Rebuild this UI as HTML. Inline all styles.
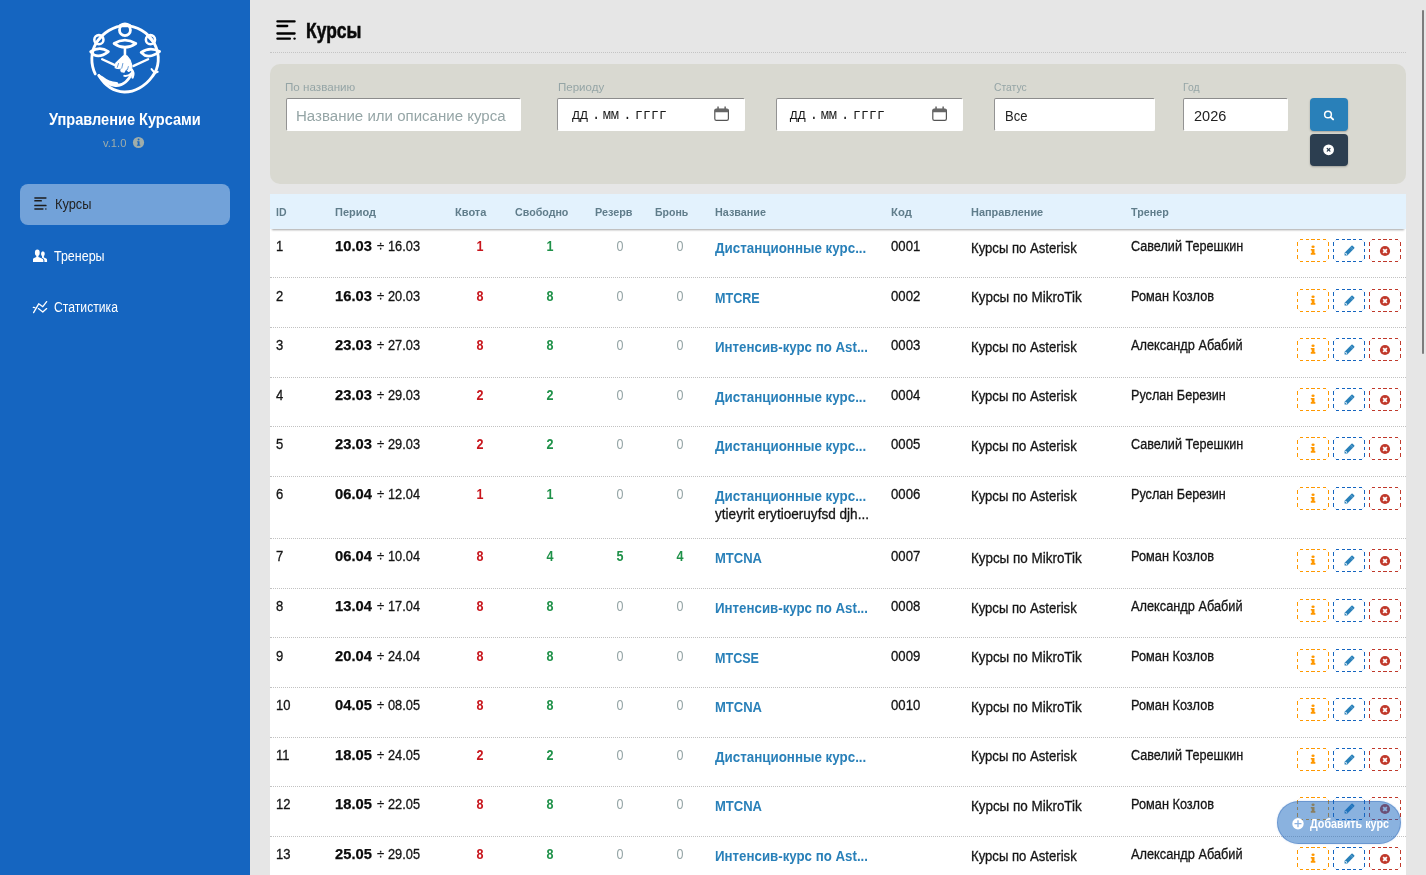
<!DOCTYPE html><html lang="ru"><head><meta charset="utf-8"><title>Курсы</title><style>
*{box-sizing:border-box}
html,body{margin:0;padding:0}
body{width:1426px;height:875px;overflow:hidden;position:relative;background:#e6e6e6;font-family:"Liberation Sans",sans-serif;}
.t{position:absolute;white-space:pre;line-height:20px;display:block}
.abs{position:absolute}
#side{position:absolute;left:0;top:0;width:250px;height:875px;background:#1565c0}
#active{position:absolute;left:20px;top:184px;width:210px;height:40.6px;border-radius:8px;background:rgba(255,255,255,.4)}
#hline{position:absolute;left:270px;top:52px;width:1136px;height:0;border-top:1px dotted #c4c4c4}
#filter{position:absolute;left:270px;top:64px;width:1136px;height:119.5px;border-radius:10px;background:#d9d9d1}
.inp{position:absolute;top:98px;height:33px;background:#fff;border-top:1px solid #8c8c8c;border-left:1px solid #939393;border-right:1px solid #fff;border-bottom:1px solid #fff;border-radius:2px}
.btn{position:absolute;left:1310px;width:38px;border-radius:4px;box-shadow:0 1px 2px rgba(0,0,0,.25)}
#thead{position:absolute;left:270px;top:194px;width:1136px;height:34.8px;background:#e3f2fd;box-shadow:0 3.2px 2px -2px rgba(0,0,0,.36);z-index:2}
#tbody{position:absolute;left:270px;top:228.8px;width:1136px;height:660px;background:#fff}
.row{position:absolute;left:270px;width:1136px;border-bottom:1px dotted #c2c2c2}
.ab{position:absolute;width:32px;height:23px;background:
linear-gradient(90deg,transparent 3px,var(--c) 3px 6.45px,transparent 6.45px 9px,var(--c) 9px 12px,transparent 12px 14.4px,var(--c) 14.4px 17.6px,transparent 17.6px 20px,var(--c) 20px 23px,transparent 23px 25.55px,var(--c) 25.55px 29px,transparent 29px) 0 0/100% 1px no-repeat,
linear-gradient(90deg,transparent 3px,var(--c) 3px 6.45px,transparent 6.45px 9px,var(--c) 9px 12px,transparent 12px 14.4px,var(--c) 14.4px 17.6px,transparent 17.6px 20px,var(--c) 20px 23px,transparent 23px 25.55px,var(--c) 25.55px 29px,transparent 29px) 0 100%/100% 1px no-repeat,
linear-gradient(180deg,transparent 2.9px,var(--c) 2.9px 7px,transparent 7px 9.8px,var(--c) 9.8px 13px,transparent 13px 15.9px,var(--c) 15.9px 20px,transparent 20px) 0 0/1px 100% no-repeat,
linear-gradient(180deg,transparent 2.9px,var(--c) 2.9px 7px,transparent 7px 9.8px,var(--c) 9.8px 13px,transparent 13px 15.9px,var(--c) 15.9px 20px,transparent 20px) 100% 0/1px 100% no-repeat,
linear-gradient(var(--d),var(--d)) 2.1px 0.6px/1px 1px no-repeat,
linear-gradient(var(--d),var(--d)) 0.6px 2.0px/1px 1px no-repeat,
linear-gradient(var(--d),var(--d)) 28.9px 0.6px/1px 1px no-repeat,
linear-gradient(var(--d),var(--d)) 30.4px 2.0px/1px 1px no-repeat,
linear-gradient(var(--d),var(--d)) 2.1px 21.4px/1px 1px no-repeat,
linear-gradient(var(--d),var(--d)) 0.6px 20.0px/1px 1px no-repeat,
linear-gradient(var(--d),var(--d)) 28.9px 21.4px/1px 1px no-repeat,
linear-gradient(var(--d),var(--d)) 30.4px 20.0px/1px 1px no-repeat}
.ab svg{position:absolute;left:50%;top:50%}
#add{position:absolute;left:1277px;top:801px;width:124px;height:43.4px;border-radius:22px;background:rgba(21,101,192,.5);z-index:5;border:1px solid rgba(21,80,170,.28);box-shadow:0 0 1.5px rgba(21,101,192,.3)}
#txt{position:absolute;left:0;top:0;width:1426px;height:875px;z-index:7;will-change:transform;pointer-events:none}
#sb{position:absolute;left:1422px;top:10px;width:2px;height:344px;background:#7d7d7d;border-radius:1px;z-index:9}
</style></head><body>
<div id="side"></div><div id="active"></div>
<svg class="abs" style="left:85px;top:17px;" width="80" height="80" viewBox="0 0 875 875">
<g fill="none" stroke="#fff" stroke-linecap="round" stroke-linejoin="round">
 <path d="M112 622 C62 520 60 385 120 290 C190 172 320 96 435 94 C560 96 690 162 758 290 C828 420 808 560 738 648 C660 758 540 822 430 820 C330 816 225 762 152 640" stroke-width="31"/>
 <circle cx="437" cy="143" r="60" stroke-width="31"/>
 <path d="M385 92 Q437 60 490 92" stroke-width="30"/>
 <circle cx="152" cy="248" r="50" stroke-width="28"/>
 <circle cx="716" cy="248" r="50" stroke-width="28"/>
 <path d="M112 292 L195 207" stroke-width="18"/>
 <path d="M678 207 L760 292" stroke-width="18"/>
 <path d="M318 290 Q437 215 556 290 Q437 372 318 290 Z" stroke-width="30"/>
 <path d="M62 380 Q160 312 256 378 Q170 445 100 415 Z" stroke-width="30"/>
 <path d="M614 388 Q712 318 816 378 Q735 445 655 420 Z" stroke-width="30"/>
 <path d="M437 345 L437 430" stroke-width="28"/>
 <path d="M188 462 L345 535" stroke-width="26"/>
 <path d="M690 462 L532 535" stroke-width="26"/>
 <path d="M152 640 Q235 738 332 750 Q450 758 520 602" stroke-width="30"/>
 <path d="M175 660 Q260 728 345 730" stroke-width="40"/>
 <path d="M728 570 L762 612 L795 600" stroke-width="22"/>
</g>
<path d="M419 424 L458 424 L494 472 L514 532 L510 580 L478 596 L452 574 L428 604 L398 598 L384 566 L352 562 L330 556 L336 506 Z" fill="#fff" stroke="#fff" stroke-width="12" stroke-linejoin="round"/>
<g stroke="#1565c0" stroke-width="7" stroke-linecap="round"><path d="M367 508 L353 550"/><path d="M414 508 L402 560"/><path d="M474 542 L464 578"/></g>
<path d="M452 580 L440 612 M384 570 L378 590" stroke="#1565c0" stroke-width="10" stroke-linecap="round"/>
<path d="M512 578 Q542 612 520 662" fill="none" stroke="#fff" stroke-width="26" stroke-linecap="round"/>
<path d="M506 618 Q470 652 430 644" fill="none" stroke="#fff" stroke-width="22" stroke-linecap="round"/>
</svg>
<svg class="abs" style="left:132px;top:136px;" width="13" height="13" viewBox="0 0 13 13"><circle cx="6.5" cy="6.5" r="5.6" fill="#9fadaa"/><g fill="#1565c0"><circle cx="6.6" cy="3.5" r="0.95"/><path d="M5.1 5.2H7.5V8.7H8.3V9.8H4.9V8.7H5.7V6.2H5.1Z"/></g></svg>
<svg class="abs" style="left:33.6px;top:197.4px;overflow:visible;" width="12.8" height="12.8" viewBox="0 0 20 20"><rect x="0.3" y="0.20" width="19.4" height="2.4" rx="1.1" fill="#1c1c1c"/><rect x="0.3" y="4.80" width="12.1" height="2.4" rx="1.1" fill="#1c1c1c"/><rect x="0.3" y="12.25" width="19.4" height="2.4" rx="1.1" fill="#1c1c1c"/><rect x="0.3" y="17.40" width="14.7" height="2.4" rx="1.1" fill="#1c1c1c"/><circle cx="18.55" cy="18.6" r="1.2" fill="#1c1c1c"/></svg>
<svg class="abs" style="left:33px;top:249px;" width="15" height="14" viewBox="0 0 15 14"><g fill="#fff"><ellipse cx="4.3" cy="3.7" rx="2.4" ry="3.3"/><path d="M0 13V10.3Q0 9.3 1.1 8.9L3.3 8V6H5.4V8L9 9.4Q10.4 10 10.4 11.4V13Z"/><ellipse cx="9.9" cy="4.8" rx="1.85" ry="2.5"/><path d="M11.4 13V11.2Q11.3 9.9 10 9.3L9 8.7V7H10.9V8.5L13.2 9.6Q14.05 10 14.05 11V13Z"/></g></svg>
<svg class="abs" style="left:33px;top:301px;overflow:visible;" width="15" height="13" viewBox="0 0 15 13"><g fill="none" stroke="#fff" stroke-width="1.3" stroke-linecap="round" stroke-linejoin="round"><path d="M0.6 11.6L5.7 2.8L9.8 5.7L13.65 0.6"/><path d="M0.3 6.3L1.9 6.6"/><path d="M5.4 7.6L9.8 11.1L13.65 7.6"/></g></svg>
<svg class="abs" style="left:275.5px;top:20.2px;overflow:visible;" width="20" height="20" viewBox="0 0 20 20"><rect x="0.3" y="0.20" width="19.4" height="2.4" rx="1.1" fill="#000"/><rect x="0.3" y="4.80" width="12.1" height="2.4" rx="1.1" fill="#000"/><rect x="0.3" y="12.25" width="19.4" height="2.4" rx="1.1" fill="#000"/><rect x="0.3" y="17.40" width="14.7" height="2.4" rx="1.1" fill="#000"/><circle cx="18.55" cy="18.6" r="1.2" fill="#000"/></svg>
<div id="hline"></div><div id="filter"></div>
<div class="inp" style="left:285.5px;width:235.5px"></div>
<div class="inp" style="left:557px;width:188px"></div>
<div class="inp" style="left:776px;width:187px"></div>
<div class="inp" style="left:994px;width:161px"></div>
<div class="inp" style="left:1183px;width:105px"></div>
<svg class="abs" style="left:714px;top:106px" width="16" height="16" viewBox="0 0 16 16"><g fill="none" stroke="#555" stroke-width="1.2"><rect x="0.8" y="3" width="13.6" height="11.4" rx="1.6"/></g><path d="M0.8 4.6Q0.8 3 2.4 3H12.8Q14.4 3 14.4 4.6V6.3H0.8Z" fill="#666"/><rect x="3.3" y="0.5" width="1.5" height="3" fill="#666"/><rect x="10.4" y="0.5" width="1.5" height="3" fill="#666"/></svg>
<svg class="abs" style="left:932px;top:106px" width="16" height="16" viewBox="0 0 16 16"><g fill="none" stroke="#555" stroke-width="1.2"><rect x="0.8" y="3" width="13.6" height="11.4" rx="1.6"/></g><path d="M0.8 4.6Q0.8 3 2.4 3H12.8Q14.4 3 14.4 4.6V6.3H0.8Z" fill="#666"/><rect x="3.3" y="0.5" width="1.5" height="3" fill="#666"/><rect x="10.4" y="0.5" width="1.5" height="3" fill="#666"/></svg>
<div class="btn" style="top:98px;height:33px;background:#2980b9"></div>
<div class="btn" style="top:134px;height:32px;background:#2c3e50"></div>
<svg class="abs" style="left:1322px;top:109px;" width="14" height="13" viewBox="0 0 14 13"><g fill="none" stroke="#fff" stroke-linecap="round"><circle cx="6" cy="5.5" r="3.35" stroke-width="1.5"/><path d="M8.7 8.1L11.1 10.4" stroke-width="2"/></g></svg>
<svg class="abs" style="left:1322px;top:143px;" width="14" height="14" viewBox="0 0 14 14"><circle cx="6.6" cy="6.8" r="5.4" fill="#fff"/><path d="M5.25 5.45L7.95 8.15M7.95 5.45L5.25 8.15" stroke="#2c3e50" stroke-width="1.3" stroke-linecap="round"/></svg>
<div id="tbody"></div><div id="thead"></div>
<div class="row" style="top:228.80px;height:49.6px"></div>
<div class="ab" style="left:1297px;top:239.00px;--c:#ff9800;--d:rgba(255,152,0,.12)"><svg width="8" height="12" viewBox="0 0 8 12" style="margin:-6.5px 0 0 -4.0px"><g fill="#ff9800"><ellipse cx="4.05" cy="2.75" rx="1.6" ry="1.25"/><path d="M1.8 5.0H5.5V8.9H6.35V10.75H1.8V8.9H2.7V6.5H1.8Z"/></g></svg></div>
<div class="ab" style="left:1333px;top:239.00px;--c:#1565c0;--d:rgba(21,101,192,.12)"><svg width="12" height="12" viewBox="-6 -6 12 12" style="margin:-5.4px 0 0 -6.0px;overflow:visible"><g transform="rotate(-45)" fill="#2980b9"><path d="M-4.3 -1.95H5.4Q6.25 -1.95 6.25 -1.1V1.1Q6.25 1.95 5.4 1.95H-4.3L-6.25 0Z"/><path d="M-4.0 -1.15L-4.0 1.15" stroke="#fff" stroke-width="0.95"/><path d="M3.2 -1.95V1.95M4.3 -1.95V1.95" stroke="#fff" stroke-width="0.35" opacity=".6"/></g></svg></div>
<div class="ab" style="left:1369px;top:239.00px;--c:#c0392b;--d:rgba(192,57,43,.12)"><svg width="12" height="12" viewBox="0 0 12 12" style="margin:-5.55px 0 0 -5.8px"><circle cx="6" cy="6" r="5.1" fill="#c0392b"/><path d="M4.15 4.15L7.85 7.85M7.85 4.15L4.15 7.85" stroke="#fff" stroke-width="1.75"/></svg></div>
<div class="row" style="top:278.40px;height:49.6px"></div>
<div class="ab" style="left:1297px;top:289.00px;--c:#ff9800;--d:rgba(255,152,0,.12)"><svg width="8" height="12" viewBox="0 0 8 12" style="margin:-6.5px 0 0 -4.0px"><g fill="#ff9800"><ellipse cx="4.05" cy="2.75" rx="1.6" ry="1.25"/><path d="M1.8 5.0H5.5V8.9H6.35V10.75H1.8V8.9H2.7V6.5H1.8Z"/></g></svg></div>
<div class="ab" style="left:1333px;top:289.00px;--c:#1565c0;--d:rgba(21,101,192,.12)"><svg width="12" height="12" viewBox="-6 -6 12 12" style="margin:-5.4px 0 0 -6.0px;overflow:visible"><g transform="rotate(-45)" fill="#2980b9"><path d="M-4.3 -1.95H5.4Q6.25 -1.95 6.25 -1.1V1.1Q6.25 1.95 5.4 1.95H-4.3L-6.25 0Z"/><path d="M-4.0 -1.15L-4.0 1.15" stroke="#fff" stroke-width="0.95"/><path d="M3.2 -1.95V1.95M4.3 -1.95V1.95" stroke="#fff" stroke-width="0.35" opacity=".6"/></g></svg></div>
<div class="ab" style="left:1369px;top:289.00px;--c:#c0392b;--d:rgba(192,57,43,.12)"><svg width="12" height="12" viewBox="0 0 12 12" style="margin:-5.55px 0 0 -5.8px"><circle cx="6" cy="6" r="5.1" fill="#c0392b"/><path d="M4.15 4.15L7.85 7.85M7.85 4.15L4.15 7.85" stroke="#fff" stroke-width="1.75"/></svg></div>
<div class="row" style="top:328.00px;height:49.6px"></div>
<div class="ab" style="left:1297px;top:338.00px;--c:#ff9800;--d:rgba(255,152,0,.12)"><svg width="8" height="12" viewBox="0 0 8 12" style="margin:-6.5px 0 0 -4.0px"><g fill="#ff9800"><ellipse cx="4.05" cy="2.75" rx="1.6" ry="1.25"/><path d="M1.8 5.0H5.5V8.9H6.35V10.75H1.8V8.9H2.7V6.5H1.8Z"/></g></svg></div>
<div class="ab" style="left:1333px;top:338.00px;--c:#1565c0;--d:rgba(21,101,192,.12)"><svg width="12" height="12" viewBox="-6 -6 12 12" style="margin:-5.4px 0 0 -6.0px;overflow:visible"><g transform="rotate(-45)" fill="#2980b9"><path d="M-4.3 -1.95H5.4Q6.25 -1.95 6.25 -1.1V1.1Q6.25 1.95 5.4 1.95H-4.3L-6.25 0Z"/><path d="M-4.0 -1.15L-4.0 1.15" stroke="#fff" stroke-width="0.95"/><path d="M3.2 -1.95V1.95M4.3 -1.95V1.95" stroke="#fff" stroke-width="0.35" opacity=".6"/></g></svg></div>
<div class="ab" style="left:1369px;top:338.00px;--c:#c0392b;--d:rgba(192,57,43,.12)"><svg width="12" height="12" viewBox="0 0 12 12" style="margin:-5.55px 0 0 -5.8px"><circle cx="6" cy="6" r="5.1" fill="#c0392b"/><path d="M4.15 4.15L7.85 7.85M7.85 4.15L4.15 7.85" stroke="#fff" stroke-width="1.75"/></svg></div>
<div class="row" style="top:377.60px;height:49.6px"></div>
<div class="ab" style="left:1297px;top:388.00px;--c:#ff9800;--d:rgba(255,152,0,.12)"><svg width="8" height="12" viewBox="0 0 8 12" style="margin:-6.5px 0 0 -4.0px"><g fill="#ff9800"><ellipse cx="4.05" cy="2.75" rx="1.6" ry="1.25"/><path d="M1.8 5.0H5.5V8.9H6.35V10.75H1.8V8.9H2.7V6.5H1.8Z"/></g></svg></div>
<div class="ab" style="left:1333px;top:388.00px;--c:#1565c0;--d:rgba(21,101,192,.12)"><svg width="12" height="12" viewBox="-6 -6 12 12" style="margin:-5.4px 0 0 -6.0px;overflow:visible"><g transform="rotate(-45)" fill="#2980b9"><path d="M-4.3 -1.95H5.4Q6.25 -1.95 6.25 -1.1V1.1Q6.25 1.95 5.4 1.95H-4.3L-6.25 0Z"/><path d="M-4.0 -1.15L-4.0 1.15" stroke="#fff" stroke-width="0.95"/><path d="M3.2 -1.95V1.95M4.3 -1.95V1.95" stroke="#fff" stroke-width="0.35" opacity=".6"/></g></svg></div>
<div class="ab" style="left:1369px;top:388.00px;--c:#c0392b;--d:rgba(192,57,43,.12)"><svg width="12" height="12" viewBox="0 0 12 12" style="margin:-5.55px 0 0 -5.8px"><circle cx="6" cy="6" r="5.1" fill="#c0392b"/><path d="M4.15 4.15L7.85 7.85M7.85 4.15L4.15 7.85" stroke="#fff" stroke-width="1.75"/></svg></div>
<div class="row" style="top:427.20px;height:49.6px"></div>
<div class="ab" style="left:1297px;top:437.00px;--c:#ff9800;--d:rgba(255,152,0,.12)"><svg width="8" height="12" viewBox="0 0 8 12" style="margin:-6.5px 0 0 -4.0px"><g fill="#ff9800"><ellipse cx="4.05" cy="2.75" rx="1.6" ry="1.25"/><path d="M1.8 5.0H5.5V8.9H6.35V10.75H1.8V8.9H2.7V6.5H1.8Z"/></g></svg></div>
<div class="ab" style="left:1333px;top:437.00px;--c:#1565c0;--d:rgba(21,101,192,.12)"><svg width="12" height="12" viewBox="-6 -6 12 12" style="margin:-5.4px 0 0 -6.0px;overflow:visible"><g transform="rotate(-45)" fill="#2980b9"><path d="M-4.3 -1.95H5.4Q6.25 -1.95 6.25 -1.1V1.1Q6.25 1.95 5.4 1.95H-4.3L-6.25 0Z"/><path d="M-4.0 -1.15L-4.0 1.15" stroke="#fff" stroke-width="0.95"/><path d="M3.2 -1.95V1.95M4.3 -1.95V1.95" stroke="#fff" stroke-width="0.35" opacity=".6"/></g></svg></div>
<div class="ab" style="left:1369px;top:437.00px;--c:#c0392b;--d:rgba(192,57,43,.12)"><svg width="12" height="12" viewBox="0 0 12 12" style="margin:-5.55px 0 0 -5.8px"><circle cx="6" cy="6" r="5.1" fill="#c0392b"/><path d="M4.15 4.15L7.85 7.85M7.85 4.15L4.15 7.85" stroke="#fff" stroke-width="1.75"/></svg></div>
<div class="row" style="top:476.80px;height:62.4px"></div>
<div class="ab" style="left:1297px;top:487.00px;--c:#ff9800;--d:rgba(255,152,0,.12)"><svg width="8" height="12" viewBox="0 0 8 12" style="margin:-6.5px 0 0 -4.0px"><g fill="#ff9800"><ellipse cx="4.05" cy="2.75" rx="1.6" ry="1.25"/><path d="M1.8 5.0H5.5V8.9H6.35V10.75H1.8V8.9H2.7V6.5H1.8Z"/></g></svg></div>
<div class="ab" style="left:1333px;top:487.00px;--c:#1565c0;--d:rgba(21,101,192,.12)"><svg width="12" height="12" viewBox="-6 -6 12 12" style="margin:-5.4px 0 0 -6.0px;overflow:visible"><g transform="rotate(-45)" fill="#2980b9"><path d="M-4.3 -1.95H5.4Q6.25 -1.95 6.25 -1.1V1.1Q6.25 1.95 5.4 1.95H-4.3L-6.25 0Z"/><path d="M-4.0 -1.15L-4.0 1.15" stroke="#fff" stroke-width="0.95"/><path d="M3.2 -1.95V1.95M4.3 -1.95V1.95" stroke="#fff" stroke-width="0.35" opacity=".6"/></g></svg></div>
<div class="ab" style="left:1369px;top:487.00px;--c:#c0392b;--d:rgba(192,57,43,.12)"><svg width="12" height="12" viewBox="0 0 12 12" style="margin:-5.55px 0 0 -5.8px"><circle cx="6" cy="6" r="5.1" fill="#c0392b"/><path d="M4.15 4.15L7.85 7.85M7.85 4.15L4.15 7.85" stroke="#fff" stroke-width="1.75"/></svg></div>
<div class="row" style="top:539.20px;height:49.6px"></div>
<div class="ab" style="left:1297px;top:549.00px;--c:#ff9800;--d:rgba(255,152,0,.12)"><svg width="8" height="12" viewBox="0 0 8 12" style="margin:-6.5px 0 0 -4.0px"><g fill="#ff9800"><ellipse cx="4.05" cy="2.75" rx="1.6" ry="1.25"/><path d="M1.8 5.0H5.5V8.9H6.35V10.75H1.8V8.9H2.7V6.5H1.8Z"/></g></svg></div>
<div class="ab" style="left:1333px;top:549.00px;--c:#1565c0;--d:rgba(21,101,192,.12)"><svg width="12" height="12" viewBox="-6 -6 12 12" style="margin:-5.4px 0 0 -6.0px;overflow:visible"><g transform="rotate(-45)" fill="#2980b9"><path d="M-4.3 -1.95H5.4Q6.25 -1.95 6.25 -1.1V1.1Q6.25 1.95 5.4 1.95H-4.3L-6.25 0Z"/><path d="M-4.0 -1.15L-4.0 1.15" stroke="#fff" stroke-width="0.95"/><path d="M3.2 -1.95V1.95M4.3 -1.95V1.95" stroke="#fff" stroke-width="0.35" opacity=".6"/></g></svg></div>
<div class="ab" style="left:1369px;top:549.00px;--c:#c0392b;--d:rgba(192,57,43,.12)"><svg width="12" height="12" viewBox="0 0 12 12" style="margin:-5.55px 0 0 -5.8px"><circle cx="6" cy="6" r="5.1" fill="#c0392b"/><path d="M4.15 4.15L7.85 7.85M7.85 4.15L4.15 7.85" stroke="#fff" stroke-width="1.75"/></svg></div>
<div class="row" style="top:588.80px;height:49.6px"></div>
<div class="ab" style="left:1297px;top:599.00px;--c:#ff9800;--d:rgba(255,152,0,.12)"><svg width="8" height="12" viewBox="0 0 8 12" style="margin:-6.5px 0 0 -4.0px"><g fill="#ff9800"><ellipse cx="4.05" cy="2.75" rx="1.6" ry="1.25"/><path d="M1.8 5.0H5.5V8.9H6.35V10.75H1.8V8.9H2.7V6.5H1.8Z"/></g></svg></div>
<div class="ab" style="left:1333px;top:599.00px;--c:#1565c0;--d:rgba(21,101,192,.12)"><svg width="12" height="12" viewBox="-6 -6 12 12" style="margin:-5.4px 0 0 -6.0px;overflow:visible"><g transform="rotate(-45)" fill="#2980b9"><path d="M-4.3 -1.95H5.4Q6.25 -1.95 6.25 -1.1V1.1Q6.25 1.95 5.4 1.95H-4.3L-6.25 0Z"/><path d="M-4.0 -1.15L-4.0 1.15" stroke="#fff" stroke-width="0.95"/><path d="M3.2 -1.95V1.95M4.3 -1.95V1.95" stroke="#fff" stroke-width="0.35" opacity=".6"/></g></svg></div>
<div class="ab" style="left:1369px;top:599.00px;--c:#c0392b;--d:rgba(192,57,43,.12)"><svg width="12" height="12" viewBox="0 0 12 12" style="margin:-5.55px 0 0 -5.8px"><circle cx="6" cy="6" r="5.1" fill="#c0392b"/><path d="M4.15 4.15L7.85 7.85M7.85 4.15L4.15 7.85" stroke="#fff" stroke-width="1.75"/></svg></div>
<div class="row" style="top:638.40px;height:49.6px"></div>
<div class="ab" style="left:1297px;top:649.00px;--c:#ff9800;--d:rgba(255,152,0,.12)"><svg width="8" height="12" viewBox="0 0 8 12" style="margin:-6.5px 0 0 -4.0px"><g fill="#ff9800"><ellipse cx="4.05" cy="2.75" rx="1.6" ry="1.25"/><path d="M1.8 5.0H5.5V8.9H6.35V10.75H1.8V8.9H2.7V6.5H1.8Z"/></g></svg></div>
<div class="ab" style="left:1333px;top:649.00px;--c:#1565c0;--d:rgba(21,101,192,.12)"><svg width="12" height="12" viewBox="-6 -6 12 12" style="margin:-5.4px 0 0 -6.0px;overflow:visible"><g transform="rotate(-45)" fill="#2980b9"><path d="M-4.3 -1.95H5.4Q6.25 -1.95 6.25 -1.1V1.1Q6.25 1.95 5.4 1.95H-4.3L-6.25 0Z"/><path d="M-4.0 -1.15L-4.0 1.15" stroke="#fff" stroke-width="0.95"/><path d="M3.2 -1.95V1.95M4.3 -1.95V1.95" stroke="#fff" stroke-width="0.35" opacity=".6"/></g></svg></div>
<div class="ab" style="left:1369px;top:649.00px;--c:#c0392b;--d:rgba(192,57,43,.12)"><svg width="12" height="12" viewBox="0 0 12 12" style="margin:-5.55px 0 0 -5.8px"><circle cx="6" cy="6" r="5.1" fill="#c0392b"/><path d="M4.15 4.15L7.85 7.85M7.85 4.15L4.15 7.85" stroke="#fff" stroke-width="1.75"/></svg></div>
<div class="row" style="top:688.00px;height:49.6px"></div>
<div class="ab" style="left:1297px;top:698.00px;--c:#ff9800;--d:rgba(255,152,0,.12)"><svg width="8" height="12" viewBox="0 0 8 12" style="margin:-6.5px 0 0 -4.0px"><g fill="#ff9800"><ellipse cx="4.05" cy="2.75" rx="1.6" ry="1.25"/><path d="M1.8 5.0H5.5V8.9H6.35V10.75H1.8V8.9H2.7V6.5H1.8Z"/></g></svg></div>
<div class="ab" style="left:1333px;top:698.00px;--c:#1565c0;--d:rgba(21,101,192,.12)"><svg width="12" height="12" viewBox="-6 -6 12 12" style="margin:-5.4px 0 0 -6.0px;overflow:visible"><g transform="rotate(-45)" fill="#2980b9"><path d="M-4.3 -1.95H5.4Q6.25 -1.95 6.25 -1.1V1.1Q6.25 1.95 5.4 1.95H-4.3L-6.25 0Z"/><path d="M-4.0 -1.15L-4.0 1.15" stroke="#fff" stroke-width="0.95"/><path d="M3.2 -1.95V1.95M4.3 -1.95V1.95" stroke="#fff" stroke-width="0.35" opacity=".6"/></g></svg></div>
<div class="ab" style="left:1369px;top:698.00px;--c:#c0392b;--d:rgba(192,57,43,.12)"><svg width="12" height="12" viewBox="0 0 12 12" style="margin:-5.55px 0 0 -5.8px"><circle cx="6" cy="6" r="5.1" fill="#c0392b"/><path d="M4.15 4.15L7.85 7.85M7.85 4.15L4.15 7.85" stroke="#fff" stroke-width="1.75"/></svg></div>
<div class="row" style="top:737.60px;height:49.6px"></div>
<div class="ab" style="left:1297px;top:748.00px;--c:#ff9800;--d:rgba(255,152,0,.12)"><svg width="8" height="12" viewBox="0 0 8 12" style="margin:-6.5px 0 0 -4.0px"><g fill="#ff9800"><ellipse cx="4.05" cy="2.75" rx="1.6" ry="1.25"/><path d="M1.8 5.0H5.5V8.9H6.35V10.75H1.8V8.9H2.7V6.5H1.8Z"/></g></svg></div>
<div class="ab" style="left:1333px;top:748.00px;--c:#1565c0;--d:rgba(21,101,192,.12)"><svg width="12" height="12" viewBox="-6 -6 12 12" style="margin:-5.4px 0 0 -6.0px;overflow:visible"><g transform="rotate(-45)" fill="#2980b9"><path d="M-4.3 -1.95H5.4Q6.25 -1.95 6.25 -1.1V1.1Q6.25 1.95 5.4 1.95H-4.3L-6.25 0Z"/><path d="M-4.0 -1.15L-4.0 1.15" stroke="#fff" stroke-width="0.95"/><path d="M3.2 -1.95V1.95M4.3 -1.95V1.95" stroke="#fff" stroke-width="0.35" opacity=".6"/></g></svg></div>
<div class="ab" style="left:1369px;top:748.00px;--c:#c0392b;--d:rgba(192,57,43,.12)"><svg width="12" height="12" viewBox="0 0 12 12" style="margin:-5.55px 0 0 -5.8px"><circle cx="6" cy="6" r="5.1" fill="#c0392b"/><path d="M4.15 4.15L7.85 7.85M7.85 4.15L4.15 7.85" stroke="#fff" stroke-width="1.75"/></svg></div>
<div class="row" style="top:787.20px;height:49.6px"></div>
<div class="ab" style="left:1297px;top:797.00px;--c:#ff9800;--d:rgba(255,152,0,.12)"><svg width="8" height="12" viewBox="0 0 8 12" style="margin:-6.5px 0 0 -4.0px"><g fill="#ff9800"><ellipse cx="4.05" cy="2.75" rx="1.6" ry="1.25"/><path d="M1.8 5.0H5.5V8.9H6.35V10.75H1.8V8.9H2.7V6.5H1.8Z"/></g></svg></div>
<div class="ab" style="left:1333px;top:797.00px;--c:#1565c0;--d:rgba(21,101,192,.12)"><svg width="12" height="12" viewBox="-6 -6 12 12" style="margin:-5.4px 0 0 -6.0px;overflow:visible"><g transform="rotate(-45)" fill="#2980b9"><path d="M-4.3 -1.95H5.4Q6.25 -1.95 6.25 -1.1V1.1Q6.25 1.95 5.4 1.95H-4.3L-6.25 0Z"/><path d="M-4.0 -1.15L-4.0 1.15" stroke="#fff" stroke-width="0.95"/><path d="M3.2 -1.95V1.95M4.3 -1.95V1.95" stroke="#fff" stroke-width="0.35" opacity=".6"/></g></svg></div>
<div class="ab" style="left:1369px;top:797.00px;--c:#c0392b;--d:rgba(192,57,43,.12)"><svg width="12" height="12" viewBox="0 0 12 12" style="margin:-5.55px 0 0 -5.8px"><circle cx="6" cy="6" r="5.1" fill="#c0392b"/><path d="M4.15 4.15L7.85 7.85M7.85 4.15L4.15 7.85" stroke="#fff" stroke-width="1.75"/></svg></div>
<div class="row" style="top:836.80px;height:49.6px"></div>
<div class="ab" style="left:1297px;top:847.00px;--c:#ff9800;--d:rgba(255,152,0,.12)"><svg width="8" height="12" viewBox="0 0 8 12" style="margin:-6.5px 0 0 -4.0px"><g fill="#ff9800"><ellipse cx="4.05" cy="2.75" rx="1.6" ry="1.25"/><path d="M1.8 5.0H5.5V8.9H6.35V10.75H1.8V8.9H2.7V6.5H1.8Z"/></g></svg></div>
<div class="ab" style="left:1333px;top:847.00px;--c:#1565c0;--d:rgba(21,101,192,.12)"><svg width="12" height="12" viewBox="-6 -6 12 12" style="margin:-5.4px 0 0 -6.0px;overflow:visible"><g transform="rotate(-45)" fill="#2980b9"><path d="M-4.3 -1.95H5.4Q6.25 -1.95 6.25 -1.1V1.1Q6.25 1.95 5.4 1.95H-4.3L-6.25 0Z"/><path d="M-4.0 -1.15L-4.0 1.15" stroke="#fff" stroke-width="0.95"/><path d="M3.2 -1.95V1.95M4.3 -1.95V1.95" stroke="#fff" stroke-width="0.35" opacity=".6"/></g></svg></div>
<div class="ab" style="left:1369px;top:847.00px;--c:#c0392b;--d:rgba(192,57,43,.12)"><svg width="12" height="12" viewBox="0 0 12 12" style="margin:-5.55px 0 0 -5.8px"><circle cx="6" cy="6" r="5.1" fill="#c0392b"/><path d="M4.15 4.15L7.85 7.85M7.85 4.15L4.15 7.85" stroke="#fff" stroke-width="1.75"/></svg></div>
<div id="txt">
<span class="t" style="left:275.60px;top:236.00px;font-size:14px;color:#151515;transform:scaleX(0.9300);transform-origin:0 50%;-webkit-text-stroke:0.3px #151515;">1</span>
<span class="t" style="left:334.90px;top:236.00px;font-size:15.5px;color:#0c0c0c;transform:scaleX(0.9511);transform-origin:0 50%;font-weight:700;-webkit-text-stroke:0.25px #0c0c0c;">10.03</span>
<span class="t" style="left:377.00px;top:236.00px;font-size:14px;color:#151515;transform:scaleX(0.9366);transform-origin:0 50%;-webkit-text-stroke:0.3px #151515;">÷</span>
<span class="t" style="left:388.00px;top:236.00px;font-size:14px;color:#151515;transform:scaleX(0.9131);transform-origin:0 50%;-webkit-text-stroke:0.3px #151515;">16.03</span>
<span class="t" style="left:476.10px;top:236.00px;font-size:14px;color:#c8161d;transform:scaleX(0.8978);transform-origin:50% 50%;font-weight:700;">1</span>
<span class="t" style="left:546.10px;top:236.00px;font-size:14px;color:#1f9149;transform:scaleX(0.8978);transform-origin:50% 50%;font-weight:700;">1</span>
<span class="t" style="left:616.10px;top:236.00px;font-size:14px;color:#95a5a6;transform:scaleX(0.8978);transform-origin:50% 50%;">0</span>
<span class="t" style="left:676.10px;top:236.00px;font-size:14px;color:#95a5a6;transform:scaleX(0.8978);transform-origin:50% 50%;">0</span>
<span class="t" style="left:715.20px;top:238.00px;font-size:15.5px;color:#2980b9;transform:scaleX(0.8628);transform-origin:0 50%;font-weight:700;">Дистанционные курс...</span>
<span class="t" style="left:891.00px;top:236.00px;font-size:14px;color:#151515;transform:scaleX(0.9404);transform-origin:0 50%;-webkit-text-stroke:0.3px #151515;">0001</span>
<span class="t" style="left:971.00px;top:238.00px;font-size:14px;color:#151515;transform:scaleX(0.9372);transform-origin:0 50%;-webkit-text-stroke:0.3px #151515;">Курсы по Asterisk</span>
<span class="t" style="left:1131.20px;top:236.00px;font-size:14px;color:#151515;transform:scaleX(0.9020);transform-origin:0 50%;-webkit-text-stroke:0.3px #151515;">Савелий Терешкин</span>
<span class="t" style="left:275.60px;top:286.00px;font-size:14px;color:#151515;transform:scaleX(0.9300);transform-origin:0 50%;-webkit-text-stroke:0.3px #151515;">2</span>
<span class="t" style="left:334.90px;top:286.00px;font-size:15.5px;color:#0c0c0c;transform:scaleX(0.9511);transform-origin:0 50%;font-weight:700;-webkit-text-stroke:0.25px #0c0c0c;">16.03</span>
<span class="t" style="left:377.00px;top:286.00px;font-size:14px;color:#151515;transform:scaleX(0.9366);transform-origin:0 50%;-webkit-text-stroke:0.3px #151515;">÷</span>
<span class="t" style="left:388.00px;top:286.00px;font-size:14px;color:#151515;transform:scaleX(0.9131);transform-origin:0 50%;-webkit-text-stroke:0.3px #151515;">20.03</span>
<span class="t" style="left:476.10px;top:286.00px;font-size:14px;color:#c8161d;transform:scaleX(0.8978);transform-origin:50% 50%;font-weight:700;">8</span>
<span class="t" style="left:546.10px;top:286.00px;font-size:14px;color:#1f9149;transform:scaleX(0.8978);transform-origin:50% 50%;font-weight:700;">8</span>
<span class="t" style="left:616.10px;top:286.00px;font-size:14px;color:#95a5a6;transform:scaleX(0.8978);transform-origin:50% 50%;">0</span>
<span class="t" style="left:676.10px;top:286.00px;font-size:14px;color:#95a5a6;transform:scaleX(0.8978);transform-origin:50% 50%;">0</span>
<span class="t" style="left:715.20px;top:288.00px;font-size:15.5px;color:#2980b9;transform:scaleX(0.8111);transform-origin:0 50%;font-weight:700;">MTCRE</span>
<span class="t" style="left:891.00px;top:286.00px;font-size:14px;color:#151515;transform:scaleX(0.9404);transform-origin:0 50%;-webkit-text-stroke:0.3px #151515;">0002</span>
<span class="t" style="left:971.00px;top:287.00px;font-size:14px;color:#151515;transform:scaleX(0.9605);transform-origin:0 50%;-webkit-text-stroke:0.3px #151515;">Курсы по MikroTik</span>
<span class="t" style="left:1131.20px;top:286.00px;font-size:14px;color:#151515;transform:scaleX(0.9107);transform-origin:0 50%;-webkit-text-stroke:0.3px #151515;">Роман Козлов</span>
<span class="t" style="left:275.60px;top:335.00px;font-size:14px;color:#151515;transform:scaleX(0.9300);transform-origin:0 50%;-webkit-text-stroke:0.3px #151515;">3</span>
<span class="t" style="left:334.90px;top:335.00px;font-size:15.5px;color:#0c0c0c;transform:scaleX(0.9511);transform-origin:0 50%;font-weight:700;-webkit-text-stroke:0.25px #0c0c0c;">23.03</span>
<span class="t" style="left:377.00px;top:335.00px;font-size:14px;color:#151515;transform:scaleX(0.9366);transform-origin:0 50%;-webkit-text-stroke:0.3px #151515;">÷</span>
<span class="t" style="left:388.00px;top:335.00px;font-size:14px;color:#151515;transform:scaleX(0.9131);transform-origin:0 50%;-webkit-text-stroke:0.3px #151515;">27.03</span>
<span class="t" style="left:476.10px;top:335.00px;font-size:14px;color:#c8161d;transform:scaleX(0.8978);transform-origin:50% 50%;font-weight:700;">8</span>
<span class="t" style="left:546.10px;top:335.00px;font-size:14px;color:#1f9149;transform:scaleX(0.8978);transform-origin:50% 50%;font-weight:700;">8</span>
<span class="t" style="left:616.10px;top:335.00px;font-size:14px;color:#95a5a6;transform:scaleX(0.8978);transform-origin:50% 50%;">0</span>
<span class="t" style="left:676.10px;top:335.00px;font-size:14px;color:#95a5a6;transform:scaleX(0.8978);transform-origin:50% 50%;">0</span>
<span class="t" style="left:715.20px;top:337.00px;font-size:15.5px;color:#2980b9;transform:scaleX(0.8571);transform-origin:0 50%;font-weight:700;">Интенсив-курс по Ast...</span>
<span class="t" style="left:891.00px;top:335.00px;font-size:14px;color:#151515;transform:scaleX(0.9404);transform-origin:0 50%;-webkit-text-stroke:0.3px #151515;">0003</span>
<span class="t" style="left:971.00px;top:337.00px;font-size:14px;color:#151515;transform:scaleX(0.9372);transform-origin:0 50%;-webkit-text-stroke:0.3px #151515;">Курсы по Asterisk</span>
<span class="t" style="left:1131.20px;top:335.00px;font-size:14px;color:#151515;transform:scaleX(0.9116);transform-origin:0 50%;-webkit-text-stroke:0.3px #151515;">Александр Абабий</span>
<span class="t" style="left:275.60px;top:385.00px;font-size:14px;color:#151515;transform:scaleX(0.9300);transform-origin:0 50%;-webkit-text-stroke:0.3px #151515;">4</span>
<span class="t" style="left:334.90px;top:385.00px;font-size:15.5px;color:#0c0c0c;transform:scaleX(0.9511);transform-origin:0 50%;font-weight:700;-webkit-text-stroke:0.25px #0c0c0c;">23.03</span>
<span class="t" style="left:377.00px;top:385.00px;font-size:14px;color:#151515;transform:scaleX(0.9366);transform-origin:0 50%;-webkit-text-stroke:0.3px #151515;">÷</span>
<span class="t" style="left:388.00px;top:385.00px;font-size:14px;color:#151515;transform:scaleX(0.9131);transform-origin:0 50%;-webkit-text-stroke:0.3px #151515;">29.03</span>
<span class="t" style="left:476.10px;top:385.00px;font-size:14px;color:#c8161d;transform:scaleX(0.8978);transform-origin:50% 50%;font-weight:700;">2</span>
<span class="t" style="left:546.10px;top:385.00px;font-size:14px;color:#1f9149;transform:scaleX(0.8978);transform-origin:50% 50%;font-weight:700;">2</span>
<span class="t" style="left:616.10px;top:385.00px;font-size:14px;color:#95a5a6;transform:scaleX(0.8978);transform-origin:50% 50%;">0</span>
<span class="t" style="left:676.10px;top:385.00px;font-size:14px;color:#95a5a6;transform:scaleX(0.8978);transform-origin:50% 50%;">0</span>
<span class="t" style="left:715.20px;top:387.00px;font-size:15.5px;color:#2980b9;transform:scaleX(0.8628);transform-origin:0 50%;font-weight:700;">Дистанционные курс...</span>
<span class="t" style="left:891.00px;top:385.00px;font-size:14px;color:#151515;transform:scaleX(0.9404);transform-origin:0 50%;-webkit-text-stroke:0.3px #151515;">0004</span>
<span class="t" style="left:971.00px;top:386.00px;font-size:14px;color:#151515;transform:scaleX(0.9372);transform-origin:0 50%;-webkit-text-stroke:0.3px #151515;">Курсы по Asterisk</span>
<span class="t" style="left:1131.20px;top:385.00px;font-size:14px;color:#151515;transform:scaleX(0.9031);transform-origin:0 50%;-webkit-text-stroke:0.3px #151515;">Руслан Березин</span>
<span class="t" style="left:275.60px;top:434.00px;font-size:14px;color:#151515;transform:scaleX(0.9300);transform-origin:0 50%;-webkit-text-stroke:0.3px #151515;">5</span>
<span class="t" style="left:334.90px;top:434.00px;font-size:15.5px;color:#0c0c0c;transform:scaleX(0.9511);transform-origin:0 50%;font-weight:700;-webkit-text-stroke:0.25px #0c0c0c;">23.03</span>
<span class="t" style="left:377.00px;top:434.00px;font-size:14px;color:#151515;transform:scaleX(0.9366);transform-origin:0 50%;-webkit-text-stroke:0.3px #151515;">÷</span>
<span class="t" style="left:388.00px;top:434.00px;font-size:14px;color:#151515;transform:scaleX(0.9131);transform-origin:0 50%;-webkit-text-stroke:0.3px #151515;">29.03</span>
<span class="t" style="left:476.10px;top:434.00px;font-size:14px;color:#c8161d;transform:scaleX(0.8978);transform-origin:50% 50%;font-weight:700;">2</span>
<span class="t" style="left:546.10px;top:434.00px;font-size:14px;color:#1f9149;transform:scaleX(0.8978);transform-origin:50% 50%;font-weight:700;">2</span>
<span class="t" style="left:616.10px;top:434.00px;font-size:14px;color:#95a5a6;transform:scaleX(0.8978);transform-origin:50% 50%;">0</span>
<span class="t" style="left:676.10px;top:434.00px;font-size:14px;color:#95a5a6;transform:scaleX(0.8978);transform-origin:50% 50%;">0</span>
<span class="t" style="left:715.20px;top:436.00px;font-size:15.5px;color:#2980b9;transform:scaleX(0.8628);transform-origin:0 50%;font-weight:700;">Дистанционные курс...</span>
<span class="t" style="left:891.00px;top:434.00px;font-size:14px;color:#151515;transform:scaleX(0.9404);transform-origin:0 50%;-webkit-text-stroke:0.3px #151515;">0005</span>
<span class="t" style="left:971.00px;top:436.00px;font-size:14px;color:#151515;transform:scaleX(0.9372);transform-origin:0 50%;-webkit-text-stroke:0.3px #151515;">Курсы по Asterisk</span>
<span class="t" style="left:1131.20px;top:434.00px;font-size:14px;color:#151515;transform:scaleX(0.9020);transform-origin:0 50%;-webkit-text-stroke:0.3px #151515;">Савелий Терешкин</span>
<span class="t" style="left:275.60px;top:484.00px;font-size:14px;color:#151515;transform:scaleX(0.9300);transform-origin:0 50%;-webkit-text-stroke:0.3px #151515;">6</span>
<span class="t" style="left:334.90px;top:484.00px;font-size:15.5px;color:#0c0c0c;transform:scaleX(0.9511);transform-origin:0 50%;font-weight:700;-webkit-text-stroke:0.25px #0c0c0c;">06.04</span>
<span class="t" style="left:377.00px;top:484.00px;font-size:14px;color:#151515;transform:scaleX(0.9366);transform-origin:0 50%;-webkit-text-stroke:0.3px #151515;">÷</span>
<span class="t" style="left:388.00px;top:484.00px;font-size:14px;color:#151515;transform:scaleX(0.9131);transform-origin:0 50%;-webkit-text-stroke:0.3px #151515;">12.04</span>
<span class="t" style="left:476.10px;top:484.00px;font-size:14px;color:#c8161d;transform:scaleX(0.8978);transform-origin:50% 50%;font-weight:700;">1</span>
<span class="t" style="left:546.10px;top:484.00px;font-size:14px;color:#1f9149;transform:scaleX(0.8978);transform-origin:50% 50%;font-weight:700;">1</span>
<span class="t" style="left:616.10px;top:484.00px;font-size:14px;color:#95a5a6;transform:scaleX(0.8978);transform-origin:50% 50%;">0</span>
<span class="t" style="left:676.10px;top:484.00px;font-size:14px;color:#95a5a6;transform:scaleX(0.8978);transform-origin:50% 50%;">0</span>
<span class="t" style="left:715.20px;top:486.00px;font-size:15.5px;color:#2980b9;transform:scaleX(0.8628);transform-origin:0 50%;font-weight:700;">Дистанционные курс...</span>
<span class="t" style="left:715.20px;top:504.00px;font-size:14px;color:#151515;transform:scaleX(0.9702);transform-origin:0 50%;-webkit-text-stroke:0.3px #151515;">ytieyrit erytioeruyfsd djh...</span>
<span class="t" style="left:891.00px;top:484.00px;font-size:14px;color:#151515;transform:scaleX(0.9404);transform-origin:0 50%;-webkit-text-stroke:0.3px #151515;">0006</span>
<span class="t" style="left:971.00px;top:486.00px;font-size:14px;color:#151515;transform:scaleX(0.9372);transform-origin:0 50%;-webkit-text-stroke:0.3px #151515;">Курсы по Asterisk</span>
<span class="t" style="left:1131.20px;top:484.00px;font-size:14px;color:#151515;transform:scaleX(0.9031);transform-origin:0 50%;-webkit-text-stroke:0.3px #151515;">Руслан Березин</span>
<span class="t" style="left:275.60px;top:546.00px;font-size:14px;color:#151515;transform:scaleX(0.9300);transform-origin:0 50%;-webkit-text-stroke:0.3px #151515;">7</span>
<span class="t" style="left:334.90px;top:546.00px;font-size:15.5px;color:#0c0c0c;transform:scaleX(0.9511);transform-origin:0 50%;font-weight:700;-webkit-text-stroke:0.25px #0c0c0c;">06.04</span>
<span class="t" style="left:377.00px;top:546.00px;font-size:14px;color:#151515;transform:scaleX(0.9366);transform-origin:0 50%;-webkit-text-stroke:0.3px #151515;">÷</span>
<span class="t" style="left:388.00px;top:546.00px;font-size:14px;color:#151515;transform:scaleX(0.9131);transform-origin:0 50%;-webkit-text-stroke:0.3px #151515;">10.04</span>
<span class="t" style="left:476.10px;top:546.00px;font-size:14px;color:#c8161d;transform:scaleX(0.8978);transform-origin:50% 50%;font-weight:700;">8</span>
<span class="t" style="left:546.10px;top:546.00px;font-size:14px;color:#1f9149;transform:scaleX(0.8978);transform-origin:50% 50%;font-weight:700;">4</span>
<span class="t" style="left:616.10px;top:546.00px;font-size:14px;color:#1f9149;transform:scaleX(0.8978);transform-origin:50% 50%;font-weight:700;">5</span>
<span class="t" style="left:676.10px;top:546.00px;font-size:14px;color:#1f9149;transform:scaleX(0.8978);transform-origin:50% 50%;font-weight:700;">4</span>
<span class="t" style="left:715.20px;top:548.00px;font-size:15.5px;color:#2980b9;transform:scaleX(0.8398);transform-origin:0 50%;font-weight:700;">MTCNA</span>
<span class="t" style="left:891.00px;top:546.00px;font-size:14px;color:#151515;transform:scaleX(0.9404);transform-origin:0 50%;-webkit-text-stroke:0.3px #151515;">0007</span>
<span class="t" style="left:971.00px;top:548.00px;font-size:14px;color:#151515;transform:scaleX(0.9605);transform-origin:0 50%;-webkit-text-stroke:0.3px #151515;">Курсы по MikroTik</span>
<span class="t" style="left:1131.20px;top:546.00px;font-size:14px;color:#151515;transform:scaleX(0.9107);transform-origin:0 50%;-webkit-text-stroke:0.3px #151515;">Роман Козлов</span>
<span class="t" style="left:275.60px;top:596.00px;font-size:14px;color:#151515;transform:scaleX(0.9300);transform-origin:0 50%;-webkit-text-stroke:0.3px #151515;">8</span>
<span class="t" style="left:334.90px;top:596.00px;font-size:15.5px;color:#0c0c0c;transform:scaleX(0.9511);transform-origin:0 50%;font-weight:700;-webkit-text-stroke:0.25px #0c0c0c;">13.04</span>
<span class="t" style="left:377.00px;top:596.00px;font-size:14px;color:#151515;transform:scaleX(0.9366);transform-origin:0 50%;-webkit-text-stroke:0.3px #151515;">÷</span>
<span class="t" style="left:388.00px;top:596.00px;font-size:14px;color:#151515;transform:scaleX(0.9131);transform-origin:0 50%;-webkit-text-stroke:0.3px #151515;">17.04</span>
<span class="t" style="left:476.10px;top:596.00px;font-size:14px;color:#c8161d;transform:scaleX(0.8978);transform-origin:50% 50%;font-weight:700;">8</span>
<span class="t" style="left:546.10px;top:596.00px;font-size:14px;color:#1f9149;transform:scaleX(0.8978);transform-origin:50% 50%;font-weight:700;">8</span>
<span class="t" style="left:616.10px;top:596.00px;font-size:14px;color:#95a5a6;transform:scaleX(0.8978);transform-origin:50% 50%;">0</span>
<span class="t" style="left:676.10px;top:596.00px;font-size:14px;color:#95a5a6;transform:scaleX(0.8978);transform-origin:50% 50%;">0</span>
<span class="t" style="left:715.20px;top:598.00px;font-size:15.5px;color:#2980b9;transform:scaleX(0.8571);transform-origin:0 50%;font-weight:700;">Интенсив-курс по Ast...</span>
<span class="t" style="left:891.00px;top:596.00px;font-size:14px;color:#151515;transform:scaleX(0.9404);transform-origin:0 50%;-webkit-text-stroke:0.3px #151515;">0008</span>
<span class="t" style="left:971.00px;top:598.00px;font-size:14px;color:#151515;transform:scaleX(0.9372);transform-origin:0 50%;-webkit-text-stroke:0.3px #151515;">Курсы по Asterisk</span>
<span class="t" style="left:1131.20px;top:596.00px;font-size:14px;color:#151515;transform:scaleX(0.9116);transform-origin:0 50%;-webkit-text-stroke:0.3px #151515;">Александр Абабий</span>
<span class="t" style="left:275.60px;top:646.00px;font-size:14px;color:#151515;transform:scaleX(0.9300);transform-origin:0 50%;-webkit-text-stroke:0.3px #151515;">9</span>
<span class="t" style="left:334.90px;top:646.00px;font-size:15.5px;color:#0c0c0c;transform:scaleX(0.9511);transform-origin:0 50%;font-weight:700;-webkit-text-stroke:0.25px #0c0c0c;">20.04</span>
<span class="t" style="left:377.00px;top:646.00px;font-size:14px;color:#151515;transform:scaleX(0.9366);transform-origin:0 50%;-webkit-text-stroke:0.3px #151515;">÷</span>
<span class="t" style="left:388.00px;top:646.00px;font-size:14px;color:#151515;transform:scaleX(0.9131);transform-origin:0 50%;-webkit-text-stroke:0.3px #151515;">24.04</span>
<span class="t" style="left:476.10px;top:646.00px;font-size:14px;color:#c8161d;transform:scaleX(0.8978);transform-origin:50% 50%;font-weight:700;">8</span>
<span class="t" style="left:546.10px;top:646.00px;font-size:14px;color:#1f9149;transform:scaleX(0.8978);transform-origin:50% 50%;font-weight:700;">8</span>
<span class="t" style="left:616.10px;top:646.00px;font-size:14px;color:#95a5a6;transform:scaleX(0.8978);transform-origin:50% 50%;">0</span>
<span class="t" style="left:676.10px;top:646.00px;font-size:14px;color:#95a5a6;transform:scaleX(0.8978);transform-origin:50% 50%;">0</span>
<span class="t" style="left:715.20px;top:648.00px;font-size:15.5px;color:#2980b9;transform:scaleX(0.8111);transform-origin:0 50%;font-weight:700;">MTCSE</span>
<span class="t" style="left:891.00px;top:646.00px;font-size:14px;color:#151515;transform:scaleX(0.9404);transform-origin:0 50%;-webkit-text-stroke:0.3px #151515;">0009</span>
<span class="t" style="left:971.00px;top:647.00px;font-size:14px;color:#151515;transform:scaleX(0.9605);transform-origin:0 50%;-webkit-text-stroke:0.3px #151515;">Курсы по MikroTik</span>
<span class="t" style="left:1131.20px;top:646.00px;font-size:14px;color:#151515;transform:scaleX(0.9107);transform-origin:0 50%;-webkit-text-stroke:0.3px #151515;">Роман Козлов</span>
<span class="t" style="left:275.60px;top:695.00px;font-size:14px;color:#151515;transform:scaleX(0.9300);transform-origin:0 50%;-webkit-text-stroke:0.3px #151515;">10</span>
<span class="t" style="left:334.90px;top:695.00px;font-size:15.5px;color:#0c0c0c;transform:scaleX(0.9511);transform-origin:0 50%;font-weight:700;-webkit-text-stroke:0.25px #0c0c0c;">04.05</span>
<span class="t" style="left:377.00px;top:695.00px;font-size:14px;color:#151515;transform:scaleX(0.9366);transform-origin:0 50%;-webkit-text-stroke:0.3px #151515;">÷</span>
<span class="t" style="left:388.00px;top:695.00px;font-size:14px;color:#151515;transform:scaleX(0.9131);transform-origin:0 50%;-webkit-text-stroke:0.3px #151515;">08.05</span>
<span class="t" style="left:476.10px;top:695.00px;font-size:14px;color:#c8161d;transform:scaleX(0.8978);transform-origin:50% 50%;font-weight:700;">8</span>
<span class="t" style="left:546.10px;top:695.00px;font-size:14px;color:#1f9149;transform:scaleX(0.8978);transform-origin:50% 50%;font-weight:700;">8</span>
<span class="t" style="left:616.10px;top:695.00px;font-size:14px;color:#95a5a6;transform:scaleX(0.8978);transform-origin:50% 50%;">0</span>
<span class="t" style="left:676.10px;top:695.00px;font-size:14px;color:#95a5a6;transform:scaleX(0.8978);transform-origin:50% 50%;">0</span>
<span class="t" style="left:715.20px;top:697.00px;font-size:15.5px;color:#2980b9;transform:scaleX(0.8398);transform-origin:0 50%;font-weight:700;">MTCNA</span>
<span class="t" style="left:891.00px;top:695.00px;font-size:14px;color:#151515;transform:scaleX(0.9404);transform-origin:0 50%;-webkit-text-stroke:0.3px #151515;">0010</span>
<span class="t" style="left:971.00px;top:697.00px;font-size:14px;color:#151515;transform:scaleX(0.9605);transform-origin:0 50%;-webkit-text-stroke:0.3px #151515;">Курсы по MikroTik</span>
<span class="t" style="left:1131.20px;top:695.00px;font-size:14px;color:#151515;transform:scaleX(0.9107);transform-origin:0 50%;-webkit-text-stroke:0.3px #151515;">Роман Козлов</span>
<span class="t" style="left:275.60px;top:745.00px;font-size:14px;color:#151515;transform:scaleX(0.9300);transform-origin:0 50%;-webkit-text-stroke:0.3px #151515;">11</span>
<span class="t" style="left:334.90px;top:745.00px;font-size:15.5px;color:#0c0c0c;transform:scaleX(0.9511);transform-origin:0 50%;font-weight:700;-webkit-text-stroke:0.25px #0c0c0c;">18.05</span>
<span class="t" style="left:377.00px;top:745.00px;font-size:14px;color:#151515;transform:scaleX(0.9366);transform-origin:0 50%;-webkit-text-stroke:0.3px #151515;">÷</span>
<span class="t" style="left:388.00px;top:745.00px;font-size:14px;color:#151515;transform:scaleX(0.9131);transform-origin:0 50%;-webkit-text-stroke:0.3px #151515;">24.05</span>
<span class="t" style="left:476.10px;top:745.00px;font-size:14px;color:#c8161d;transform:scaleX(0.8978);transform-origin:50% 50%;font-weight:700;">2</span>
<span class="t" style="left:546.10px;top:745.00px;font-size:14px;color:#1f9149;transform:scaleX(0.8978);transform-origin:50% 50%;font-weight:700;">2</span>
<span class="t" style="left:616.10px;top:745.00px;font-size:14px;color:#95a5a6;transform:scaleX(0.8978);transform-origin:50% 50%;">0</span>
<span class="t" style="left:676.10px;top:745.00px;font-size:14px;color:#95a5a6;transform:scaleX(0.8978);transform-origin:50% 50%;">0</span>
<span class="t" style="left:715.20px;top:747.00px;font-size:15.5px;color:#2980b9;transform:scaleX(0.8628);transform-origin:0 50%;font-weight:700;">Дистанционные курс...</span>
<span class="t" style="left:971.00px;top:746.00px;font-size:14px;color:#151515;transform:scaleX(0.9372);transform-origin:0 50%;-webkit-text-stroke:0.3px #151515;">Курсы по Asterisk</span>
<span class="t" style="left:1131.20px;top:745.00px;font-size:14px;color:#151515;transform:scaleX(0.9020);transform-origin:0 50%;-webkit-text-stroke:0.3px #151515;">Савелий Терешкин</span>
<span class="t" style="left:275.60px;top:794.00px;font-size:14px;color:#151515;transform:scaleX(0.9300);transform-origin:0 50%;-webkit-text-stroke:0.3px #151515;">12</span>
<span class="t" style="left:334.90px;top:794.00px;font-size:15.5px;color:#0c0c0c;transform:scaleX(0.9511);transform-origin:0 50%;font-weight:700;-webkit-text-stroke:0.25px #0c0c0c;">18.05</span>
<span class="t" style="left:377.00px;top:794.00px;font-size:14px;color:#151515;transform:scaleX(0.9366);transform-origin:0 50%;-webkit-text-stroke:0.3px #151515;">÷</span>
<span class="t" style="left:388.00px;top:794.00px;font-size:14px;color:#151515;transform:scaleX(0.9131);transform-origin:0 50%;-webkit-text-stroke:0.3px #151515;">22.05</span>
<span class="t" style="left:476.10px;top:794.00px;font-size:14px;color:#c8161d;transform:scaleX(0.8978);transform-origin:50% 50%;font-weight:700;">8</span>
<span class="t" style="left:546.10px;top:794.00px;font-size:14px;color:#1f9149;transform:scaleX(0.8978);transform-origin:50% 50%;font-weight:700;">8</span>
<span class="t" style="left:616.10px;top:794.00px;font-size:14px;color:#95a5a6;transform:scaleX(0.8978);transform-origin:50% 50%;">0</span>
<span class="t" style="left:676.10px;top:794.00px;font-size:14px;color:#95a5a6;transform:scaleX(0.8978);transform-origin:50% 50%;">0</span>
<span class="t" style="left:715.20px;top:796.00px;font-size:15.5px;color:#2980b9;transform:scaleX(0.8398);transform-origin:0 50%;font-weight:700;">MTCNA</span>
<span class="t" style="left:971.00px;top:796.00px;font-size:14px;color:#151515;transform:scaleX(0.9605);transform-origin:0 50%;-webkit-text-stroke:0.3px #151515;">Курсы по MikroTik</span>
<span class="t" style="left:1131.20px;top:794.00px;font-size:14px;color:#151515;transform:scaleX(0.9107);transform-origin:0 50%;-webkit-text-stroke:0.3px #151515;">Роман Козлов</span>
<span class="t" style="left:275.60px;top:844.00px;font-size:14px;color:#151515;transform:scaleX(0.9300);transform-origin:0 50%;-webkit-text-stroke:0.3px #151515;">13</span>
<span class="t" style="left:334.90px;top:844.00px;font-size:15.5px;color:#0c0c0c;transform:scaleX(0.9511);transform-origin:0 50%;font-weight:700;-webkit-text-stroke:0.25px #0c0c0c;">25.05</span>
<span class="t" style="left:377.00px;top:844.00px;font-size:14px;color:#151515;transform:scaleX(0.9366);transform-origin:0 50%;-webkit-text-stroke:0.3px #151515;">÷</span>
<span class="t" style="left:388.00px;top:844.00px;font-size:14px;color:#151515;transform:scaleX(0.9131);transform-origin:0 50%;-webkit-text-stroke:0.3px #151515;">29.05</span>
<span class="t" style="left:476.10px;top:844.00px;font-size:14px;color:#c8161d;transform:scaleX(0.8978);transform-origin:50% 50%;font-weight:700;">8</span>
<span class="t" style="left:546.10px;top:844.00px;font-size:14px;color:#1f9149;transform:scaleX(0.8978);transform-origin:50% 50%;font-weight:700;">8</span>
<span class="t" style="left:616.10px;top:844.00px;font-size:14px;color:#95a5a6;transform:scaleX(0.8978);transform-origin:50% 50%;">0</span>
<span class="t" style="left:676.10px;top:844.00px;font-size:14px;color:#95a5a6;transform:scaleX(0.8978);transform-origin:50% 50%;">0</span>
<span class="t" style="left:715.20px;top:846.00px;font-size:15.5px;color:#2980b9;transform:scaleX(0.8571);transform-origin:0 50%;font-weight:700;">Интенсив-курс по Ast...</span>
<span class="t" style="left:971.00px;top:846.00px;font-size:14px;color:#151515;transform:scaleX(0.9372);transform-origin:0 50%;-webkit-text-stroke:0.3px #151515;">Курсы по Asterisk</span>
<span class="t" style="left:1131.20px;top:844.00px;font-size:14px;color:#151515;transform:scaleX(0.9116);transform-origin:0 50%;-webkit-text-stroke:0.3px #151515;">Александр Абабий</span>
<span class="t" style="left:49.20px;top:110.00px;font-size:16px;color:#fff;transform:scaleX(0.9096);transform-origin:0 50%;font-weight:700;">Управление Курсами</span>
<span class="t" style="left:102.60px;top:133.00px;font-size:11px;color:#9fadaa;transform:scaleX(1.0160);transform-origin:0 50%;">v.1.0</span>
<span class="t" style="left:54.50px;top:194.00px;font-size:14px;color:#222;transform:scaleX(0.9157);transform-origin:0 50%;">Курсы</span>
<span class="t" style="left:54.40px;top:246.00px;font-size:14px;color:#fff;transform:scaleX(0.8921);transform-origin:0 50%;">Тренеры</span>
<span class="t" style="left:54.40px;top:297.00px;font-size:14px;color:#fff;transform:scaleX(0.8704);transform-origin:0 50%;">Статистика</span>
<span class="t" style="left:306.30px;top:21.00px;font-size:22px;color:#0a0a0a;transform:scaleX(0.7932);transform-origin:0 50%;font-weight:700;-webkit-text-stroke:0.55px #0a0a0a;">Курсы</span>
<span class="t" style="left:285.40px;top:77.00px;font-size:11.5px;color:#95a5a6;transform:scaleX(1.0111);transform-origin:0 50%;">По названию</span>
<span class="t" style="left:557.80px;top:77.00px;font-size:11.5px;color:#95a5a6;transform:scaleX(1.0023);transform-origin:0 50%;">Периоду</span>
<span class="t" style="left:994.30px;top:77.00px;font-size:11.5px;color:#95a5a6;transform:scaleX(0.8994);transform-origin:0 50%;">Статус</span>
<span class="t" style="left:1183.40px;top:77.00px;font-size:11.5px;color:#95a5a6;transform:scaleX(0.9065);transform-origin:0 50%;">Год</span>
<span class="t" style="left:296.00px;top:106.00px;font-size:15.5px;color:#95a5a6;transform:scaleX(0.9706);transform-origin:0 50%;">Название или описание курса</span>
<span class="t" style="left:1004.80px;top:106.00px;font-size:15.5px;color:#222;transform:scaleX(0.8384);transform-origin:0 50%;">Все</span>
<span class="t" style="left:1193.80px;top:106.00px;font-size:15.5px;color:#222;transform:scaleX(0.9367);transform-origin:0 50%;">2026</span>
<span class="t" style="z-index:3;left:275.50px;top:202.00px;font-size:11px;color:#607d8b;transform:scaleX(0.9545);transform-origin:0 50%;font-weight:700;">ID</span>
<span class="t" style="z-index:3;left:335.00px;top:202.00px;font-size:11px;color:#607d8b;transform:scaleX(0.9985);transform-origin:0 50%;font-weight:700;">Период</span>
<span class="t" style="z-index:3;left:455.10px;top:202.00px;font-size:11px;color:#607d8b;transform:scaleX(1.0038);transform-origin:0 50%;font-weight:700;">Квота</span>
<span class="t" style="z-index:3;left:515.00px;top:202.00px;font-size:11px;color:#607d8b;transform:scaleX(0.9709);transform-origin:0 50%;font-weight:700;">Свободно</span>
<span class="t" style="z-index:3;left:594.70px;top:202.00px;font-size:11px;color:#607d8b;transform:scaleX(0.9840);transform-origin:0 50%;font-weight:700;">Резерв</span>
<span class="t" style="z-index:3;left:654.80px;top:202.00px;font-size:11px;color:#607d8b;transform:scaleX(0.9578);transform-origin:0 50%;font-weight:700;">Бронь</span>
<span class="t" style="z-index:3;left:715.20px;top:202.00px;font-size:11px;color:#607d8b;transform:scaleX(0.9819);transform-origin:0 50%;font-weight:700;">Название</span>
<span class="t" style="z-index:3;left:891.00px;top:202.00px;font-size:11px;color:#607d8b;transform:scaleX(1.0256);transform-origin:0 50%;font-weight:700;">Код</span>
<span class="t" style="z-index:3;left:971.00px;top:202.00px;font-size:11px;color:#607d8b;transform:scaleX(0.9937);transform-origin:0 50%;font-weight:700;">Направление</span>
<span class="t" style="z-index:3;left:1131.20px;top:202.00px;font-size:11px;color:#607d8b;transform:scaleX(0.9761);transform-origin:0 50%;font-weight:700;">Тренер</span>
<span class="t" style="left:1310.30px;top:814.00px;font-size:12px;color:#fff;transform:scaleX(0.8979);transform-origin:0 50%;font-weight:700;z-index:6;">Добавить курс</span>
<span style="position:absolute;top:106.00px;font-family:'Liberation Mono',monospace;font-size:13.8px;letter-spacing:-0.28px;line-height:20px;color:#1a1a1a;white-space:pre;left:571.9px">дд</span><span style="position:absolute;top:106.00px;font-family:'Liberation Mono',monospace;font-size:13.8px;letter-spacing:-0.28px;line-height:20px;color:#1a1a1a;white-space:pre;left:591.9px">.</span><span style="position:absolute;top:106.00px;font-family:'Liberation Mono',monospace;font-size:13.8px;letter-spacing:-0.28px;line-height:20px;color:#1a1a1a;white-space:pre;left:602.8px">мм</span><span style="position:absolute;top:106.00px;font-family:'Liberation Mono',monospace;font-size:13.8px;letter-spacing:-0.28px;line-height:20px;color:#1a1a1a;white-space:pre;left:623.2px">.</span><span style="position:absolute;top:106.00px;font-family:'Liberation Mono',monospace;font-size:13.8px;letter-spacing:-0.28px;line-height:20px;color:#1a1a1a;white-space:pre;left:634.8px">гггг</span>
<span style="position:absolute;top:106.00px;font-family:'Liberation Mono',monospace;font-size:13.8px;letter-spacing:-0.28px;line-height:20px;color:#1a1a1a;white-space:pre;left:789.8px">дд</span><span style="position:absolute;top:106.00px;font-family:'Liberation Mono',monospace;font-size:13.8px;letter-spacing:-0.28px;line-height:20px;color:#1a1a1a;white-space:pre;left:809.8px">.</span><span style="position:absolute;top:106.00px;font-family:'Liberation Mono',monospace;font-size:13.8px;letter-spacing:-0.28px;line-height:20px;color:#1a1a1a;white-space:pre;left:820.7px">мм</span><span style="position:absolute;top:106.00px;font-family:'Liberation Mono',monospace;font-size:13.8px;letter-spacing:-0.28px;line-height:20px;color:#1a1a1a;white-space:pre;left:841.1px">.</span><span style="position:absolute;top:106.00px;font-family:'Liberation Mono',monospace;font-size:13.8px;letter-spacing:-0.28px;line-height:20px;color:#1a1a1a;white-space:pre;left:852.7px">гггг</span>
</div>
<div id="add"></div>
<svg class="abs" style="left:1291px;top:817px;z-index:6;" width="14" height="14" viewBox="0 0 14 14"><circle cx="7" cy="6.7" r="5.7" fill="#fff"/><path d="M7 3.7V9.7M4 6.7H10" stroke="#8ab0df" stroke-width="1.25" stroke-linecap="round"/></svg>
<div id="sb"></div>
</body></html>
